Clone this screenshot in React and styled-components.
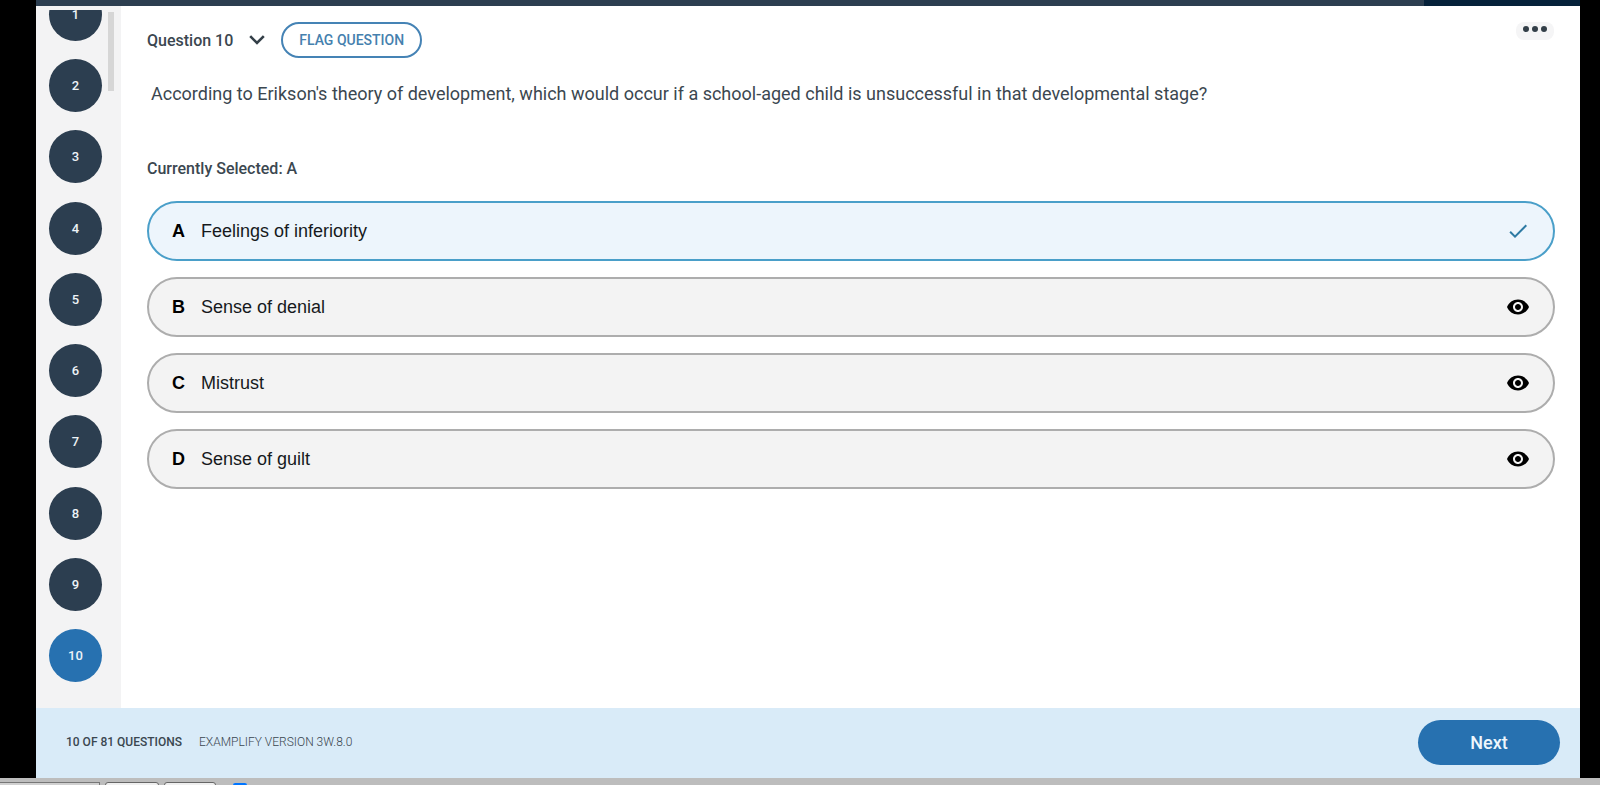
import React, { useState } from 'react';
import styled, { createGlobalStyle } from 'styled-components';
import { MdCheck, MdVisibility } from 'react-icons/md';

const questions = [1, 2, 3, 4, 5, 6, 7, 8, 9, 10];

const answers = [
  { letter: 'A', text: 'Feelings of inferiority' },
  { letter: 'B', text: 'Sense of denial' },
  { letter: 'C', text: 'Mistrust' },
  { letter: 'D', text: 'Sense of guilt' },
];

function App() {
  const [current, setCurrent] = useState(10);
  const [selected, setSelected] = useState('A');

  return (
    <Screen>
      <GlobalStyle />
      <Exam>
        <TopBar>
          <TopBarEnd />
        </TopBar>
        <Body>
          <Sidebar>
            <QuestionList>
              {questions.map((n) => (
                <QuestionButton key={n} $active={n === current} onClick={() => setCurrent(n)}>
                  {n}
                </QuestionButton>
              ))}
            </QuestionList>
            <ScrollThumb />
          </Sidebar>
          <Content>
            <Heading>
              <QuestionMenu>
                Question {current}
                <svg width="16" height="10" viewBox="0 0 16 10" fill="none">
                  <path d="M1.2 1.2 8 8l6.8-6.8" stroke="#333f48" strokeWidth="2.6" />
                </svg>
              </QuestionMenu>
              <FlagButton>FLAG QUESTION</FlagButton>
              <MoreButton aria-label="More options">
                <Dot />
                <Dot />
                <Dot />
              </MoreButton>
            </Heading>
            <Prompt>
              According to Erikson's theory of development, which would occur if a school-aged child is
              unsuccessful in that developmental stage?
            </Prompt>
            <Selection>Currently Selected: {selected}</Selection>
            <Answers>
              {answers.map(({ letter, text }) => (
                <Answer key={letter} $selected={letter === selected} onClick={() => setSelected(letter)}>
                  <Letter>{letter}</Letter>
                  <AnswerText>{text}</AnswerText>
                  {letter === selected ? <MdCheck size={24} /> : <MdVisibility size={24} />}
                </Answer>
              ))}
            </Answers>
          </Content>
        </Body>
        <Footer>
          <Progress>10 OF 81 QUESTIONS</Progress>
          <Version>EXAMPLIFY VERSION 3W.8.0</Version>
          <NextButton>Next</NextButton>
        </Footer>
      </Exam>
      <Strip>
        <StripInput type="text" aria-label="Find" />
        <StripButton $width={54} aria-label="Previous match" />
        <StripButton $width={52} aria-label="Next match" />
        <StripCheck type="checkbox" defaultChecked aria-label="Highlight" />
      </Strip>
    </Screen>
  );
}

export default App;

const GlobalStyle = createGlobalStyle`
  * {
    box-sizing: border-box;
  }
  body {
    margin: 0;
    background: #000;
    font-family: Roboto, sans-serif;
    color: #3b4750;
  }
  button {
    font-family: inherit;
    color: inherit;
    cursor: pointer;
  }
`;

const Screen = styled.div`
  display: flex;
  flex-direction: column;
  height: 100vh;
  overflow: hidden;
`;

const Exam = styled.div`
  flex: 1;
  min-height: 0;
  display: flex;
  flex-direction: column;
  margin: 0 20px 0 36px;
  background: #fff;
`;

const TopBar = styled.header`
  display: flex;
  justify-content: flex-end;
  height: 6px;
  background: #2c3e50;
`;

const TopBarEnd = styled.div`
  width: 156px;
  background: #05213a;
`;

const Body = styled.div`
  flex: 1;
  min-height: 0;
  display: flex;
`;

const Sidebar = styled.nav`
  position: relative;
  display: flex;
  width: 85px;
  padding-top: 4px;
  background: #f3f3f4;
`;

const QuestionList = styled.div`
  flex: 1;
  display: flex;
  flex-direction: column;
  justify-content: space-between;
  overflow: hidden;
  padding: 0 0 26px 13px;

  > :first-child {
    margin-top: -22px;
  }
`;

const QuestionButton = styled.button`
  flex: none;
  width: 53px;
  height: 53px;
  padding: 0;
  border: none;
  border-radius: 50%;
  background: ${({ $active }) => ($active ? '#2771b0' : '#2c3e50')};
  color: #eef3f7;
  font-size: 13px;
  font-weight: 500;
`;

const ScrollThumb = styled.div`
  position: absolute;
  top: 6px;
  right: 7px;
  width: 6px;
  height: 79px;
  background: #d6d6d6;
`;

const Content = styled.main`
  flex: 1;
  padding: 16px 25px 0 26px;
`;

const Heading = styled.div`
  display: flex;
  align-items: center;
`;

const QuestionMenu = styled.button`
  display: flex;
  align-items: center;
  gap: 16px;
  padding: 0;
  border: none;
  background: none;
  font-size: 16px;
  font-weight: 500;
`;

const FlagButton = styled.button`
  height: 36px;
  margin-left: 16px;
  padding: 0 16px;
  border: 2px solid #4583b5;
  border-radius: 18px;
  background: #fff;
  color: #4580ae;
  font-size: 14px;
  font-weight: 500;
`;

const MoreButton = styled.button`
  display: flex;
  align-self: flex-start;
  justify-content: center;
  gap: 3px;
  width: 38px;
  height: 18px;
  margin-left: auto;
  margin-right: 1px;
  padding: 4px 0 0;
  border: none;
  border-radius: 8px;
  background: #f5f5f6;
`;

const Dot = styled.span`
  width: 6px;
  height: 6px;
  border-radius: 50%;
  background: #333f48;
`;

const Prompt = styled.p`
  margin: 24px 4px 0;
  font-size: 18px;
  line-height: 24px;
`;

const Selection = styled.p`
  margin: 51px 0 20px;
  font-size: 16px;
  font-weight: 500;
  line-height: 24px;
`;

const Answers = styled.div`
  display: flex;
  flex-direction: column;
  gap: 16px;
`;

const Answer = styled.button`
  display: flex;
  align-items: center;
  height: 60px;
  padding: 0 23px;
  border: 2px solid ${({ $selected }) => ($selected ? '#4a9fc9' : '#adadad')};
  border-radius: 30px;
  background: ${({ $selected }) => ($selected ? '#edf5fc' : '#f3f3f3')};
  font-family: 'Liberation Sans', sans-serif;
  font-size: 18px;
  text-align: left;

  svg {
    color: ${({ $selected }) => ($selected ? '#2d7aa3' : '#000')};
  }
`;

const Letter = styled.span`
  width: 29px;
  color: #000;
  font-weight: 700;
`;

const AnswerText = styled.span`
  flex: 1;
  color: #16191c;
`;

const Footer = styled.footer`
  display: flex;
  align-items: center;
  height: 70px;
  padding: 0 20px 2px 30px;
  background: #d9ebf8;
  font-size: 12px;
`;

const Progress = styled.span`
  font-weight: 500;
`;

const Version = styled.span`
  margin-left: 17px;
  font-weight: 300;
`;

const NextButton = styled.button`
  width: 142px;
  height: 45px;
  margin-left: auto;
  border: none;
  border-radius: 23px;
  background: #2771b0;
  color: #eef6fc;
  font-size: 18px;
  font-weight: 500;
`;

const Strip = styled.div`
  display: flex;
  align-items: flex-start;
  gap: 5px;
  height: 7px;
  padding-top: 4px;
  overflow: hidden;
  background: #bdbdbd;
`;

const StripInput = styled.input`
  width: 100px;
  height: 20px;
  border: 1px solid #777;
  border-left: none;
  background: #d0d0d0;
`;

const StripButton = styled.button`
  width: ${({ $width }) => $width}px;
  height: 20px;
  border: 1px solid #666;
  border-radius: 3px;
  background: #efefef;
`;

const StripCheck = styled.input`
  width: 14px;
  height: 14px;
  margin: 1px 0 0 12px;
`;
